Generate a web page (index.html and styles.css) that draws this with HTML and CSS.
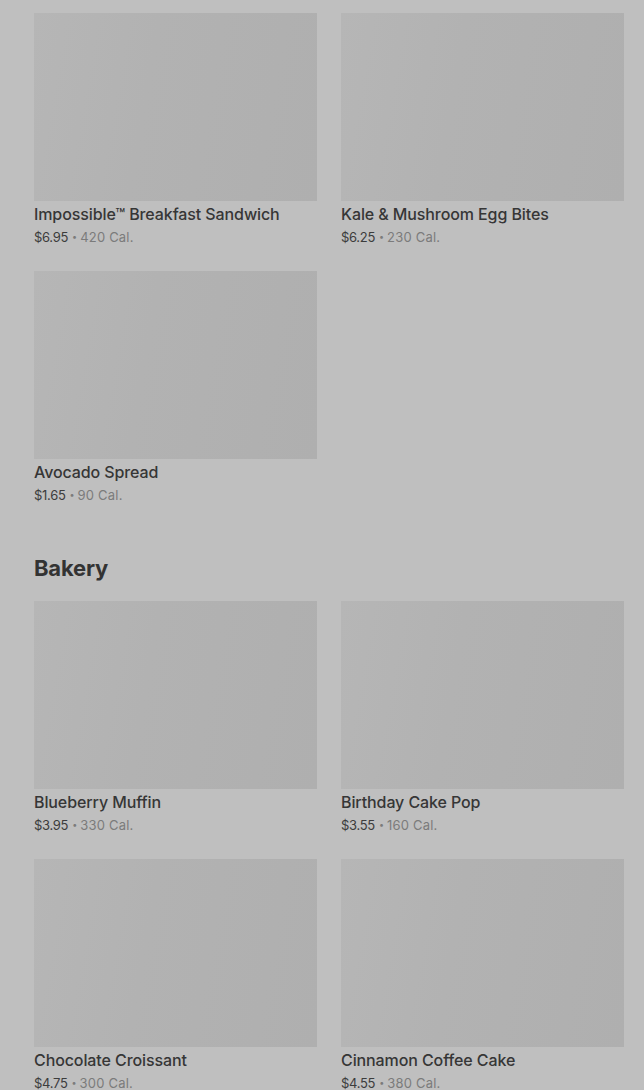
FILE: index.html
```html
<!DOCTYPE html>
<html>
<head>
<meta charset="utf-8">
<link rel="stylesheet" href="styles.css">
</head>
<body>
<div class="page">
  <section class="section">
    <div class="grid">
      <div class="card"><div class="img"></div><div class="name">Impossible™ Breakfast Sandwich</div><div class="meta"><span class="price">$6.95</span><span class="dot">•</span><span class="cal">420 Cal.</span></div></div>
      <div class="card"><div class="img"></div><div class="name">Kale &amp; Mushroom Egg Bites</div><div class="meta"><span class="price">$6.25</span><span class="dot">•</span><span class="cal">230 Cal.</span></div></div>
      <div class="card"><div class="img"></div><div class="name">Avocado Spread</div><div class="meta"><span class="price">$1.65</span><span class="dot">•</span><span class="cal">90 Cal.</span></div></div>
    </div>
  </section>
  <section class="section">
    <h2 class="heading">Bakery</h2>
    <div class="grid">
      <div class="card"><div class="img"></div><div class="name">Blueberry Muffin</div><div class="meta"><span class="price">$3.95</span><span class="dot">•</span><span class="cal">330 Cal.</span></div></div>
      <div class="card"><div class="img"></div><div class="name">Birthday Cake Pop</div><div class="meta"><span class="price">$3.55</span><span class="dot">•</span><span class="cal">160 Cal.</span></div></div>
      <div class="card"><div class="img"></div><div class="name">Chocolate Croissant</div><div class="meta"><span class="price">$4.75</span><span class="dot">•</span><span class="cal">300 Cal.</span></div></div>
      <div class="card"><div class="img"></div><div class="name">Cinnamon Coffee Cake</div><div class="meta"><span class="price">$4.55</span><span class="dot">•</span><span class="cal">380 Cal.</span></div></div>
    </div>
  </section>
</div>
</body>
</html>
```
FILE: styles.css
```css
html, body {
  margin: 0;
  padding: 0;
  background: #bfbfbf;
  font-family: Inter, Roboto, "Liberation Sans", sans-serif;
  overflow: hidden;
}
.page {
  padding: 13px 20px 0 34px;
}
.section + .section {
  margin-top: 49px;
}
.grid {
  display: grid;
  grid-template-columns: 283px 283px;
  column-gap: 24px;
  row-gap: 24px;
}
.img {
  height: 188px;
  background: linear-gradient(100deg, #b6b6b6 0%, #b2b2b2 40%, #afafaf 100%);
}
.name {
  margin-top: 3px;
  height: 20px;
  font-size: 16px;
  line-height: 20px;
  font-weight: 500;
  color: #363636;
  white-space: nowrap;
  letter-spacing: -0.1px;
}
.meta {
  margin-top: 3px;
  height: 20px;
  font-size: 13px;
  line-height: 20px;
  color: #7b7b7b;
  white-space: nowrap;
  overflow: hidden;
}
.price {
  color: #3c3c3c;
  letter-spacing: -0.3px;
}
.dot {
  display: inline-block;
  font-size: 9px;
  vertical-align: top;
  margin: 0 3px 0 4px;
}
.cal {
  letter-spacing: 0.2px;
}
.heading {
  margin: 0 0 19px;
  height: 28px;
  font-size: 22px;
  line-height: 28px;
  font-weight: 700;
  color: #333;
  letter-spacing: -0.2px;
}
```
